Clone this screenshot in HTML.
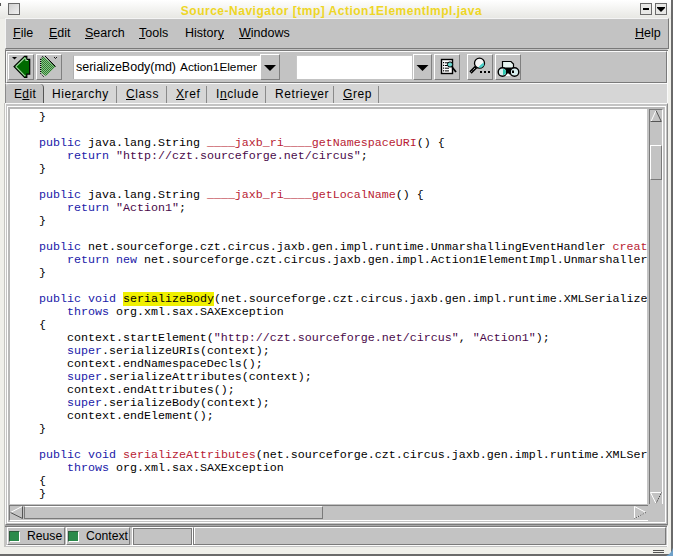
<!DOCTYPE html>
<html><head><meta charset="utf-8">
<style>
*{margin:0;padding:0;box-sizing:border-box}
html,body{width:673px;height:556px;overflow:hidden;background:#efefea}
body{position:relative;font-family:"Liberation Sans",sans-serif;font-size:12px;color:#000}
div,span.a,svg{position:absolute}
.u{text-decoration:underline;text-underline-offset:1px}
#title{left:0;top:4px;width:663px;text-align:center;color:#eed626;font-weight:bold;font-size:12px;letter-spacing:0.5px;line-height:14px;white-space:nowrap}
.mi{top:26px;font-size:12.5px;line-height:15px;white-space:nowrap}
.btn{background:#c3c3c3;border-top:1px solid #fff;border-left:1px solid #fff;border-right:1px solid #808080;border-bottom:1px solid #808080}
.tab{top:85px;height:18px;font-size:12px;line-height:15px;white-space:nowrap;background:#d6d6d6;border-right:1px solid #8a8a8a}
.tabtxt{top:1px}
pre{font-family:"Liberation Mono",monospace;font-size:11.67px;line-height:13px;position:absolute;left:1px;top:2px;white-space:pre}
.k{color:#2020a8}.f{color:#b81c34}.s{color:#4a0a4a}.h{background:#f0f000}
.sp{top:527px;height:19px;background:#c3c3c3}
.led{width:11px;height:11px;background:#2a8a4a;border-top:1px solid #2a5a3a;border-left:1px solid #2a5a3a;border-right:1px solid #fff;border-bottom:1px solid #fff}
</style></head><body>
<!-- window frame -->
<div style="left:0;top:0;width:673px;height:19px;background:linear-gradient(#ffffff,#e6e6e2)"></div>
<div style="left:671px;top:0;width:2px;height:556px;background:#6a6a6a"></div>
<div style="left:0;top:554px;width:673px;height:2px;background:#6a6a6a"></div>
<svg style="left:665px;top:548px" width="8" height="8"><path d="M8 0 L8 8 L1 8 Q6 6 8 0Z" fill="#6ea0c8"/></svg>
<div style="left:0;top:3px;width:1px;height:3px;background:#555"></div>
<!-- title buttons -->
<div style="left:8px;top:3px;width:12px;height:12px;border:1px solid #6a6a6a;background:linear-gradient(135deg,#d0d0d0,#f0f0f0)"></div>
<div style="left:640px;top:3px;width:12px;height:12px;border:1px solid #6a6a6a;background:#e8e8e6"></div>
<div style="left:643px;top:8px;width:6px;height:2px;background:#000"></div>
<div style="left:655px;top:3px;width:12px;height:12px;border:1px solid #6a6a6a;background:#e8e8e6"></div>
<svg style="left:655px;top:3px" width="12" height="12"><path d="M2 4 L10 4 L10 5 L6 9 L2 5Z" fill="#000"/></svg>
<div id="title">Source-Navigator [tmp] Action1ElementImpl.java</div>
<!-- menubar -->
<div style="left:5px;top:18px;width:664px;height:31px;background:#c3c3c3;border-top:1px solid #f4f4f4;border-left:1px solid #f4f4f4;border-right:1px solid #7a7a7a;border-bottom:1px solid #7a7a7a"></div>
<span class="a mi" style="left:13px"><span class="u">F</span>ile</span>
<span class="a mi" style="left:49px"><span class="u">E</span>dit</span>
<span class="a mi" style="left:85px"><span class="u">S</span>earch</span>
<span class="a mi" style="left:139px"><span class="u">T</span>ools</span>
<span class="a mi" style="left:185px">Histor<span class="u">y</span></span>
<span class="a mi" style="left:239px"><span class="u">W</span>indows</span>
<span class="a mi" style="left:635px"><span class="u">H</span>elp</span>
<!-- toolbar -->
<div style="left:5px;top:49px;width:663px;height:35px;background:#c3c3c3;border-top:1px solid #c3c3c3;border-left:1px solid #7a7a7a;border-right:1px solid #fafafa;border-bottom:1px solid #fafafa"></div>
<div style="left:5px;top:50px;width:663px;height:1px;background:#7a7a7a"></div>
<div style="left:6px;top:51px;width:661px;height:32px;border-top:1px solid #fafafa;border-left:1px solid #fafafa;border-right:1px solid #7a7a7a;border-bottom:1px solid #7a7a7a"></div>
<div class="btn" style="left:8px;top:54px;width:26px;height:26px"></div>
<svg style="left:8px;top:54px" width="26" height="26">
<path d="M4 3 L9 3 L6.5 5.5Z" fill="#000"/>
<path d="M6 12.6 L16.6 2.3 L18.8 2.3 L18.8 5.3 L21.7 5.3 L21.7 20.1 L18.8 20.1 L18.8 23.4 L16.6 23.4Z" fill="#006a00" stroke="#000" stroke-width="1.2"/>
<path d="M7.8 12.6 L16.8 4 L18 5.5 L18 6.5 L20 6.5 M7.8 12.6 L16.8 21.8 L17.5 21.5" fill="none" stroke="#9ed49e" stroke-width="1.2"/>
</svg>
<div class="btn" style="left:36px;top:54px;width:26px;height:26px"></div>
<svg style="left:36px;top:54px" width="26" height="26">
<defs><pattern id="chk" width="2" height="2" patternUnits="userSpaceOnUse"><rect width="1" height="1" fill="#1a6a1a"/><rect x="1" y="1" width="1" height="1" fill="#1a6a1a"/><rect x="1" width="1" height="1" fill="#7ac87a"/><rect y="1" width="1" height="1" fill="#7ac87a"/></pattern></defs>
<path d="M5 5 L7.5 2.5 L19.5 12.6 L10 22 L5 19Z" fill="url(#chk)" opacity="0.85"/>
<path d="M4.5 5 L4.5 19.5 M7 2 L4.5 5 M4.5 19.5 L8.5 23.5" fill="none" stroke="#000" stroke-width="1" stroke-dasharray="1 1"/>
<path d="M9 2 L19.6 12.6" fill="none" stroke="#000" stroke-width="1"/>
<path d="M18 3 L19.5 4.5 L21 3" fill="none" stroke="#000" stroke-width="0.9"/>
</svg>
<!-- combo 1 -->
<div style="left:73px;top:55px;width:187px;height:24px;background:#fff;border-top:1px solid #c8c8c8;border-left:1px solid #b0b0b0"></div>
<span class="a" style="left:76px;top:60px;font-size:12.5px;line-height:15px;width:181px;overflow:hidden;white-space:nowrap;display:block">serializeBody(md)<span style="margin-left:4px;font-size:11.8px">Action1Element</span></span>
<div class="btn" style="left:260px;top:54px;width:20px;height:26px"></div>
<svg style="left:260px;top:54px" width="20" height="26"><path d="M4 11 L16 11 L10 17Z" fill="#000"/></svg>
<!-- combo 2 -->
<div style="left:296px;top:55px;width:116px;height:24px;background:#fff;border-top:1px solid #c8c8c8;border-left:1px solid #c8c8c8"></div>
<div class="btn" style="left:413px;top:54px;width:19px;height:26px"></div>
<svg style="left:413px;top:54px" width="19" height="26"><path d="M3.5 11 L15.5 11 L9.5 17Z" fill="#000"/></svg>
<!-- tool buttons -->
<div class="btn" style="left:434px;top:54px;width:26px;height:26px"></div>
<svg style="left:434px;top:54px" width="26" height="26">
<rect x="7.5" y="5.5" width="11" height="14" fill="#fff" stroke="#000" stroke-width="1.4"/>
<rect x="9" y="8" width="1.2" height="1.2" fill="#000"/><rect x="11" y="8.3" width="4" height="1" fill="#000"/>
<rect x="9" y="10.8" width="1.2" height="1.2" fill="#000"/><rect x="11" y="11" width="4" height="1" fill="#000"/>
<rect x="9" y="13.5" width="1.2" height="1.2" fill="#000"/><rect x="11" y="13.7" width="4" height="1" fill="#000"/>
<rect x="9" y="16.2" width="1.2" height="1.2" fill="#000"/><rect x="11" y="16.4" width="4" height="1" fill="#000"/>
<circle cx="16" cy="10.5" r="2.6" fill="#6ad8d0" stroke="#000" stroke-width="1"/>
<path d="M18 13 L22 18" stroke="#000" stroke-width="1.8"/>
</svg>
<div class="btn" style="left:467px;top:54px;width:26px;height:26px"></div>
<svg style="left:467px;top:54px" width="26" height="26">
<path d="M9 13 L3.5 18.5" stroke="#000" stroke-width="3.2"/>
<path d="M8 14 L4 18" stroke="#fff" stroke-width="0.9" stroke-dasharray="1 1"/>
<circle cx="12.5" cy="9.2" r="5" fill="#f6f6f6" stroke="#000" stroke-width="1.3"/>
<path d="M16.8 8 A4.4 4.4 0 0 1 11 13.6 A5 5 0 0 0 16.8 8Z" fill="#40d0c8"/>
<path d="M16.6 8.5 A4.2 4.2 0 0 1 11.5 13.3 L13.5 11 Z" fill="#40d0c8"/>
<rect x="13" y="17" width="2" height="2" fill="#000"/><rect x="17" y="17" width="2" height="2" fill="#000"/><rect x="21" y="17" width="2" height="2" fill="#000"/>
</svg>
<div class="btn" style="left:495px;top:54px;width:26px;height:26px"></div>
<svg style="left:495px;top:54px" width="26" height="26">
<path d="M7.5 7.5 L16 7.5 L18.5 10 L18.5 14 L7.5 14Z" fill="#e8f4f0" stroke="#000" stroke-width="1.2"/>
<path d="M10 14 L16 14 L16.5 18 L13 22 L9.5 18Z" fill="#000"/>
<circle cx="7.5" cy="18" r="4.3" fill="#d8eeee" stroke="#000" stroke-width="1.4"/>
<circle cx="19.5" cy="18" r="4.3" fill="#d8eeee" stroke="#000" stroke-width="1.4"/>
<path d="M8 15 A3 3 0 0 1 8 21Z" fill="#30c8b0"/><path d="M17 16.5 L19 16.5 L19 19 L17 19Z" fill="#000"/>
<path d="M13 19 L15.5 22 L10.5 22Z" fill="#fff"/>
</svg>
<!-- tabs bar -->
<div style="left:5px;top:84px;width:663px;height:20px;background:#d6d6d6;border-left:1px solid #8a8a8a;border-right:1px solid #fafafa"></div>
<div style="left:6px;top:84px;width:38px;height:19px;background:#c3c3c3;border-right:1px solid #555;border-radius:4px 4px 0 0"></div>
<span class="a" style="left:14px;top:87px;font-size:12px;letter-spacing:0.35px;line-height:14px">E<span class="u">d</span>it</span>
<div style="left:116px;top:86px;width:1px;height:17px;background:#8a8a8a"></div>
<div style="left:166px;top:86px;width:1px;height:17px;background:#8a8a8a"></div>
<div style="left:206px;top:86px;width:1px;height:17px;background:#8a8a8a"></div>
<div style="left:265px;top:86px;width:1px;height:17px;background:#8a8a8a"></div>
<div style="left:333px;top:86px;width:1px;height:17px;background:#8a8a8a"></div>
<div style="left:378px;top:86px;width:1px;height:17px;background:#8a8a8a"></div>
<span class="a" style="left:52px;top:87px;font-size:12px;letter-spacing:0.6px;line-height:14px">Hie<span class="u">r</span>archy</span>
<span class="a" style="left:126px;top:87px;font-size:12px;letter-spacing:0.6px;line-height:14px"><span class="u">C</span>lass</span>
<span class="a" style="left:176px;top:87px;font-size:12px;letter-spacing:0.6px;line-height:14px"><span class="u">X</span>ref</span>
<span class="a" style="left:216px;top:87px;font-size:12px;letter-spacing:0.6px;line-height:14px">I<span class="u">n</span>clude</span>
<span class="a" style="left:275px;top:87px;font-size:12px;letter-spacing:0.6px;line-height:14px">Retrie<span class="u">v</span>er</span>
<span class="a" style="left:343px;top:87px;font-size:12px;letter-spacing:0.6px;line-height:14px"><span class="u">G</span>rep</span>
<!-- notebook page -->
<div style="left:5px;top:103px;width:663px;height:422px;background:#c3c3c3;border-top:1px solid #fafafa;border-left:1px solid #fafafa;border-right:1px solid #8a8a8a;border-bottom:1px solid #7a7a7a"></div>
<div style="left:4px;top:103px;width:1px;height:444px;background:#c4c4c0"></div>
<div style="left:7px;top:106px;width:659px;height:417px;border:1px solid #fff"></div>
<div style="left:8px;top:107px;width:2px;height:415px;background:#b8b8b8"></div>
<div style="left:8px;top:107px;width:656px;height:2px;background:#b8b8b8"></div>
<!-- vertical scrollbar -->
<div style="left:649px;top:109px;width:14px;height:395px;background:#c3c3c3;border-left:1px solid #7a7a7a;border-top:1px solid #7a7a7a;border-right:1px solid #fff"></div>
<svg style="left:650px;top:110px" width="12" height="12"><path d="M1 11.5 L6 0.5" stroke="#fff" stroke-width="1"/><path d="M6 0.5 L11.3 11.5 L0.5 11.5" fill="none" stroke="#555" stroke-width="1"/></svg>
<div style="left:650px;top:145px;width:12px;height:35px;background:#c3c3c3;border-top:1px solid #fff;border-left:1px solid #fff;border-right:1px solid #7a7a7a;border-bottom:1px solid #7a7a7a"></div>
<svg style="left:650px;top:491px" width="12" height="13"><path d="M11.5 1.5 L0.5 1.5 L6 12.5" fill="none" stroke="#fff" stroke-width="1"/><path d="M11.5 1.5 L6 12.5" fill="none" stroke="#333" stroke-width="1" stroke-dasharray="1 1"/></svg>
<!-- horizontal scrollbar -->
<div style="left:9px;top:505px;width:639px;height:16px;background:#c3c3c3;border-top:1px solid #7a7a7a;border-left:1px solid #7a7a7a;border-bottom:1px solid #fff"></div>
<svg style="left:10px;top:506px" width="13" height="13"><path d="M0.5 6.5 L12 0.5" stroke="#fff" stroke-width="1"/><path d="M0.5 6.5 L12.5 12.5 L12.5 0.5" fill="none" stroke="#555" stroke-width="1"/></svg>
<div style="left:24px;top:506px;width:299px;height:13px;background:#c3c3c3;border-top:1px solid #fff;border-left:1px solid #7a7a7a;border-right:1px solid #7a7a7a;border-bottom:1px solid #7a7a7a"></div>
<svg style="left:634px;top:506px" width="13" height="13"><path d="M0.5 0.5 L12 6.5 L0.5 12.5Z" fill="none" stroke="#fff" stroke-width="1"/><path d="M12 6.5 L0.5 12.5" stroke="#333" stroke-width="1" stroke-dasharray="1 1"/></svg>
<!-- code -->
<div style="left:10px;top:109px;width:637px;height:395px;background:#fff;overflow:hidden">
<pre>    }

    <span class="k">public</span> java.lang.String <span class="f">____jaxb_ri____getNamespaceURI</span>() {
        <span class="k">return</span> <span class="s">"http://czt.sourceforge.net/circus"</span>;
    }

    <span class="k">public</span> java.lang.String <span class="f">____jaxb_ri____getLocalName</span>() {
        <span class="k">return</span> <span class="s">"Action1"</span>;
    }

    <span class="k">public</span> net.sourceforge.czt.circus.jaxb.gen.impl.runtime.UnmarshallingEventHandler <span class="f">createUnmarshaller</span>(net.sourceforge.czt.circus.jaxb.gen.impl.runtime.UnmarshallingContext context) {
        <span class="k">return</span> <span class="k">new</span> net.sourceforge.czt.circus.jaxb.gen.impl.Action1ElementImpl.Unmarshaller(context);
    }

    <span class="k">public</span> <span class="k">void</span> <span class="h">serializeBody</span>(net.sourceforge.czt.circus.jaxb.gen.impl.runtime.XMLSerializer context)
        <span class="k">throws</span> org.xml.sax.SAXException
    {
        context.startElement(<span class="s">"http://czt.sourceforge.net/circus"</span>, <span class="s">"Action1"</span>);
        <span class="k">super</span>.serializeURIs(context);
        context.endNamespaceDecls();
        <span class="k">super</span>.serializeAttributes(context);
        context.endAttributes();
        <span class="k">super</span>.serializeBody(context);
        context.endElement();
    }

    <span class="k">public</span> <span class="k">void</span> <span class="f">serializeAttributes</span>(net.sourceforge.czt.circus.jaxb.gen.impl.runtime.XMLSerializer context)
        <span class="k">throws</span> org.xml.sax.SAXException
    {
    }
</pre></div>
<!-- status bar -->
<div style="left:5px;top:525px;width:663px;height:22px;background:#c3c3c3;border-top:1px solid #a8a8a8;border-right:1px solid #fafafa"></div>
<div style="left:5px;top:526px;width:662px;height:1px;background:#7a7a7a"></div>
<div style="left:6px;top:545px;width:662px;height:1px;background:#fafafa"></div>
<div class="sp" style="left:7px;width:58px;height:18px;border-right:1px solid #7a7a7a;border-bottom:1px solid #7a7a7a;border-top:1px solid #fff;border-left:1px solid #fff"></div>
<div class="led" style="left:9px;top:531px"></div>
<span class="a" style="left:27px;top:529px;font-size:12.2px;line-height:15px">Reuse</span>
<div class="sp" style="left:66px;width:64px;height:18px;border-right:1px solid #7a7a7a;border-bottom:1px solid #7a7a7a;border-top:1px solid #fff;border-left:1px solid #fff"></div>
<div class="led" style="left:68px;top:531px"></div>
<span class="a" style="left:86px;top:529px;font-size:12.2px;line-height:15px">Context</span>
<div class="sp" style="left:132px;width:61px;height:19px;border:1px solid #fff"></div>
<div class="sp" style="left:133px;top:528px;width:59px;height:17px;border:1px solid #7a7a7a"></div>
<div class="sp" style="left:193px;width:473px;height:18px;border-left:1px solid #7a7a7a;border-top:1px solid #fff;border-right:1px solid #7a7a7a;border-bottom:1px solid #7a7a7a"></div>
<div style="left:194px;top:528px;width:1px;height:16px;background:#fff"></div>
<div style="left:653px;top:550px;width:11px;height:1px;background:#555"></div>
<div style="left:653px;top:552px;width:11px;height:1px;background:#555"></div>
</body></html>
